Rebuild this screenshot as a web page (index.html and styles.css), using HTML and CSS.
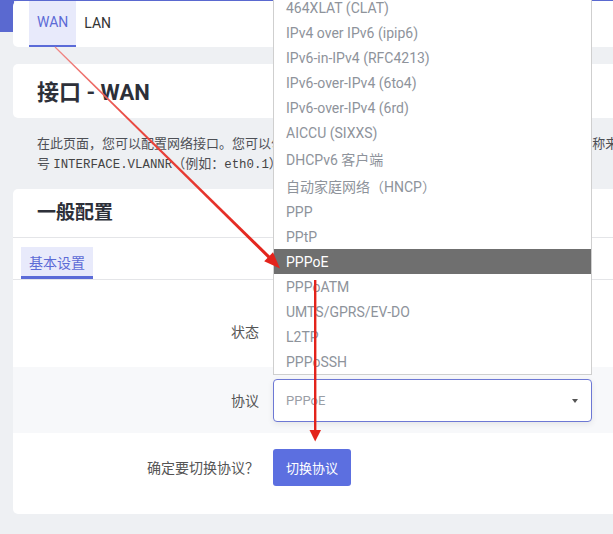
FILE: index.html
```html
<!DOCTYPE html>
<html lang="zh-CN">
<head>
<meta charset="utf-8">
<title>接口 - WAN</title>
<link rel="stylesheet" href="styles.css">
</head>
<body>
<div class="page">
  <div class="card tabs-card">
    <a class="tab active">WAN</a>
    <a class="tab">LAN</a>
  </div>

  <div class="card title-card">
    <h2 class="page-title">接口 - WAN</h2>
  </div>

  <p class="desc">在此页面，您可以配置网络接口。您可以勾选“桥接接口”，并输入由空格分隔的多个网络接口的名称来桥接多个接口。接口名称中可以使用 VLAN 记<br>号 <code>INTERFACE.VLANNR</code>（例如：<code>eth0.1</code>）。</p>

  <div class="card section">
    <h3 class="section-title">一般配置</h3>
    <div class="subtabs"><span class="subtab active">基本设置</span></div>

    <div class="row row-status">
      <label class="row-label">状态</label>
      <div class="ctrl"></div>
    </div>

    <div class="row row-proto">
      <label class="row-label">协议</label>
      <div class="ctrl select-wrap">
        <div class="select">PPPoE<span class="caret"></span></div>
        <ul class="dropdown">
          <li>464XLAT (CLAT)</li>
          <li>IPv4 over IPv6 (ipip6)</li>
          <li>IPv6-in-IPv4 (RFC4213)</li>
          <li>IPv6-over-IPv4 (6to4)</li>
          <li>IPv6-over-IPv4 (6rd)</li>
          <li>AICCU (SIXXS)</li>
          <li class="cjk">DHCPv6 客户端</li>
          <li class="cjk">自动家庭网络（HNCP）</li>
          <li>PPP</li>
          <li>PPtP</li>
          <li class="sel">PPPoE</li>
          <li>PPPoATM</li>
          <li>UMTS/GPRS/EV-DO</li>
          <li>L2TP</li>
          <li>PPPoSSH</li>
        </ul>
      </div>
    </div>

    <div class="row row-confirm">
      <label class="row-label">确定要切换协议？</label>
      <div class="ctrl"><button class="btn">切换协议</button></div>
    </div>
  </div>
</div>

<svg class="annot" width="613" height="534" viewBox="0 0 613 534">
  <defs>
    <linearGradient id="g1" x1="55" y1="47" x2="270" y2="257" gradientUnits="userSpaceOnUse">
      <stop offset="0" stop-color="#f08a88"/>
      <stop offset="0.35" stop-color="#e94a42"/>
      <stop offset="1" stop-color="#e3231b"/>
    </linearGradient>
  </defs>
  <polygon points="54.6,47.4 267.9,258.2 270.1,255.9 55.4,46.6" fill="url(#g1)"/>
  <polygon points="280,268.5 264.2,261.3 273,252.3" fill="#e3231b"/>
  <rect x="314" y="280" width="2.4" height="151" fill="#e3231b"/>
  <polygon points="309.5,430 321,430 315.2,441.5" fill="#e3231b"/>
</svg>
</body>
</html>
```

FILE: styles.css
```css
html, body {
  margin: 0;
  height: 534px;
  overflow: hidden;
}

body {
  position: relative;
  font-family: Roboto, "Noto Sans CJK SC", sans-serif;
  color: #333;
  background:
    linear-gradient(#5a69d0, #5a69d0) 0 0 / 100% 1px no-repeat,
    linear-gradient(#5a69d0, #5a69d0) 0 0 / 14px 32px no-repeat,
    #eef0f3;
}

.page {
  width: 1200px;
  padding-left: 13px;
}

.card {
  background: #fff;
  border-radius: 5px;
}

/* top tabs */
.tabs-card {
  margin-top: 1px;
  height: 46px;
  display: flex;
  padding-left: 16px;
}

.tab {
  display: flex;
  align-items: center;
  box-sizing: border-box;
  height: 46px;
  padding: 0 8px 2px;
  font-size: 14px;
  color: #333;
}

.tab.active {
  background: #e8eafb;
  color: #5c6bd6;
  border-bottom: 2px solid #5b6bd8;
}

/* title */
.title-card {
  margin-top: 17px;
  box-sizing: border-box;
  height: 54px;
  padding: 0 0 3px 24px;
  display: flex;
  align-items: center;
}

.page-title {
  margin: 0;
  font-size: 22px;
  font-weight: 700;
  color: #2d3039;
}

.desc {
  box-sizing: border-box;
  height: 39px;
  margin: 16px 0 16px;
  padding-left: 24px;
  font-size: 13px;
  line-height: 19.5px;
  color: #4d4f55;
  white-space: nowrap;
  overflow: visible;
}

.desc code {
  font-family: "Liberation Mono", monospace;
  font-size: 12.4px;
  line-height: 1;
  color: #444;
}

/* section card */
.section-title {
  margin: 0;
  box-sizing: border-box;
  height: 49px;
  padding: 0 0 5px 24px;
  display: flex;
  align-items: center;
  font-size: 19px;
  font-weight: 700;
  color: #2d3039;
  border-bottom: 1px solid #e4e5e8;
}

.subtabs {
  display: flex;
  padding: 9px 0 0 8px;
  border-bottom: 1px solid #e4e5e8;
}

.subtab {
  box-sizing: border-box;
  height: 32px;
  padding: 0 8px;
  display: flex;
  align-items: center;
  font-size: 14px;
  color: #5c6bd6;
  background: #e8eafb;
  border-bottom: 3px solid #5b6bd8;
}

.row {
  display: grid;
  grid-template-columns: 246px 319px;
  column-gap: 14px;
}

.row-label {
  text-align: right;
  font-size: 14px;
  line-height: 20px;
  color: #555;
}

.row-status {
  height: 87px;
}

.row-status .row-label {
  padding-top: 42px;
}

.row-proto {
  align-items: center;
  background: #f7f8fa;
  padding: 12px 0 11px;
}

.row-confirm {
  align-items: center;
  padding: 16px 0 28px;
}

.select-wrap {
  position: relative;
}

.select {
  box-sizing: border-box;
  height: 43px;
  display: flex;
  align-items: center;
  padding-left: 12px;
  border: 1px solid #6d78d4;
  border-radius: 4px;
  background: #fff;
  box-shadow: 0 2px 6px rgba(0, 0, 0, 0.08);
  font-size: 13px;
  color: #9a9ea6;
}

.caret {
  margin-left: auto;
  margin-right: 13px;
  width: 0;
  height: 0;
  border-left: 3.5px solid transparent;
  border-right: 3.5px solid transparent;
  border-top: 4px solid #555;
}

.dropdown {
  position: absolute;
  left: 0;
  right: 0;
  bottom: calc(100% + 4px);
  margin: 0;
  padding: 0;
  list-style: none;
  background: #fff;
  border: 1px solid #cfcfcf;
}

.dropdown li {
  height: 25px;
  display: flex;
  align-items: center;
  padding-left: 12px;
  font-size: 14px;
  color: #8e939b;
}

.dropdown li.cjk {
  height: 27px;
}

.dropdown li.sel {
  background: #6f6f6f;
  color: #fff;
}

.btn {
  height: 37px;
  padding: 0 13px;
  border: none;
  border-radius: 3px;
  background: #5c6fe0;
  color: #fff;
  font-family: inherit;
  font-size: 13px;
}

.annot {
  position: absolute;
  top: 0;
  left: 0;
  pointer-events: none;
}
```
